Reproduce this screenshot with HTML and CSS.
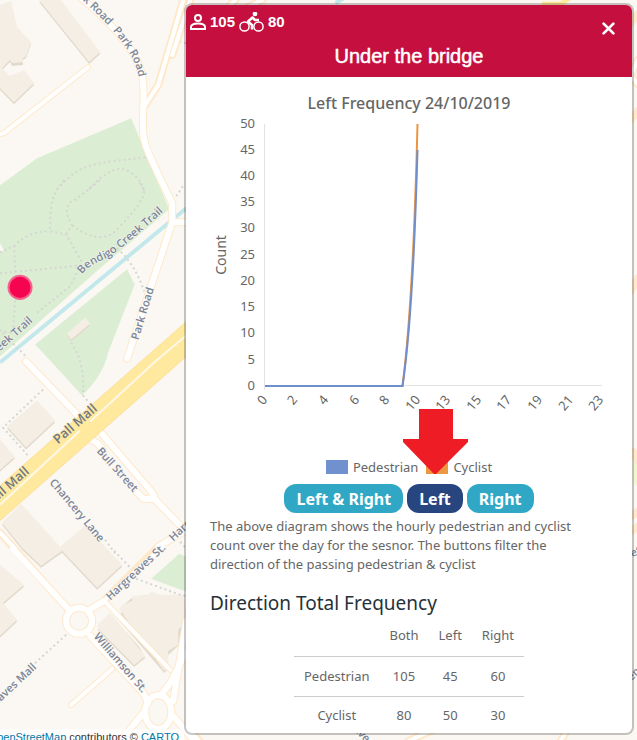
FILE: index.html
```
<!DOCTYPE html>
<html lang="en">
<head>
<meta charset="utf-8">
<meta name="viewport" content="width=device-width, initial-scale=1">
<title>Under the bridge</title>
<link rel="stylesheet" href="styles.css">
</head>
<body>
<div class="map">
  <svg class="map-tiles" viewBox="0 0 637 740" preserveAspectRatio="xMinYMin slice" role="img" aria-label="Street map">
    <g class="park">
      <path d="M0 185L37 158L131 118L160 188L169 209L100 268L0 356Z"/>
      <path d="M127 269L134.500 284L108 352Q103 375 82 395L50 360L35 344Z"/>
      <path d="M151 578L179 553L186 556V591Z"/>
      <path class="grass" d="M632 448L637 456V486L632 482Z"/>
    </g>
    <g class="building-shadow" transform="translate(0 2)">
      <path d="M0 5L11 1L17 27L31 42L26 56L23 58V63L12 64L10 60L2 68L10 76L24 70L34 83L14 102L0 88Z"/>
      <path d="M39 0H61L100 52L89 62Z"/>
      <path d="M67 333L85 317L90 323L71 339Z"/>
      <path d="M7 426L37 400L55 420L26 447Z"/>
      <path d="M0 439L15 456L0 469Z"/>
      <path d="M2 522L21 503L60 546L85 525L122 564L97 587L62 550L41 565L22 547Z"/>
      <path d="M0 564L24 584L3 602L17 619L0 635Z"/>
      <path d="M98 623L110 612L139 644L145 655L134 664L98 628Z"/>
      <path d="M121 604L132 595L153 591L185 604V626L179 642L166 654L168 666L164 670L121 620Z"/>
    </g>
    <g class="building">
      <path d="M0 5L11 1L17 27L31 42L26 56L23 58V62L12 63L10 60L2 68L10 76L24 70L34 83L14 102L0 88Z"/>
      <path d="M39 0H61L100 52L89 62Z"/>
      <path d="M67 333L85 317L90 323L71 339Z"/>
      <path d="M7 426L37 400L55 420L26 447Z"/>
      <path d="M0 439L15 456L0 469Z"/>
      <path d="M2 522L21 503L60 546L85 525L122 564L97 587L62 550L41 565L22 547Z"/>
      <path d="M0 564L24 584L3 602L17 619L0 635Z"/>
      <path d="M98 623L110 612L145 655L134 664L98 628Z"/>
      <path d="M119 608L122 604L132 600V595H145L152 591L160 594H185V621L178 629V644L168 650V665L164 670Z"/>
      <path d="M0 243L4 250L0 253Z" fill="#fbf7f2"/>
    </g>
    <path class="creek" d="M0 362L186 208M335 3L346 -3"/>
    <g class="footpath">
      <path d="M57 189C75 170 80 166 112 161L146 157M89 189C105 171 119 164 130 172Q140 178 144 190"/>
      <path d="M64 180C51 195 50 205 50 231L66 234L82 262L70 286L35 314M66 234L72 225Q60 205 76 199L100 180M72 225Q102 247 118 228Q145 200 144 190L138 180"/>
      <path d="M0 252L15 245Q30 230 50 231M14 245L16 285L13 333L0 330L25 355M0 273L80 265"/>
      <path d="M117 248Q135 264 144 291M176 196L184 184M174 41L186 43M71 342Q85 362 83 395L88 401M43 389L3 427L28 455M105 539L116 554"/>
      <path d="M114 550L132 569M136 578L180 594L186 595M66 634L33 664M180 541L186 548"/>
    </g>
    <g class="road-casing">
      <path d="M74 -8C112 23 142 54 143 84C145 108 139 132 147 149Q150 158 172 203V222L127 358M183 0L158 85L145 105M172 222H186"/>
      <path class="thin" d="M0 134L4 133L88 67"/>
      <path d="M26 361L82 419M90 439Q100 442 103 451M100 431L152 492Q158 500 143 498L137 492M152 496L185 530L158 546L104 600"/>
      <path d="M0 532L57 596L69 609M90 635L143 692L148 702M91 608L104 600M186 651L170 682L160 695M186 620L173 700M144 711L120 740M174 716L194 740"/>
      <path class="thin" d="M104 600L170 669M112 668L71 704"/>
      <path d="M190 0L172 55M235 0L230 5M262 0L246 8M636 15L628 25M637 60L630 76L637 84M637 111L630 119M637 278L630 290M632 451L637 460M631 515L637 511M631 530L637 526M190 730L199 740M408 740L432 729M560 740L567 728"/>
      <circle cx="79" cy="620" r="13"/>
      <ellipse cx="158" cy="711" rx="13" ry="17"/>
    </g>
    <g class="road">
      <path d="M74 -8C112 23 142 54 143 84C145 108 139 132 147 149Q150 158 172 203V222L127 358M172 222H186"/>
      <path class="thin" d="M183 0L158 85L145 105M0 134L4 133L88 67M112 668L71 704M104 600L170 669"/>
      <path d="M26 361L82 419M90 439Q100 442 103 451M100 431L152 492Q158 500 143 498L137 492M152 496L185 530L158 546"/>
      <path d="M13 548L57 596L69 609M90 635L143 692L148 702M91 608L104 600M186 651L170 682L160 695M186 620L173 700M144 711L120 740M174 716L194 740"/>
      <path class="thin" d="M0 532L15 548M104 600L163 545"/>
      <path class="thin" d="M190 0L172 55M235 0L230 5M262 0L246 8M637 60L630 76L637 84M190 730L199 740M408 740L432 729M560 740L567 728"/>
      <circle cx="79" cy="620" r="13"/>
      <ellipse cx="158" cy="711" rx="13" ry="17"/>
    </g>
    <g class="main-road">
      <path class="main-edge" d="M-8 501L194 323M-8 518L194 340"/>
      <path class="main-fill" d="M-8 501L194 323M-8 518L194 340"/>
      <path class="median" d="M0 504L80 430M90 421L155 361L186 335"/>
      <path class="side-main" d="M541 4L560 4L570 -3"/>
    </g>
    <g class="map-label">
      <path id="park-road" class="guide" d="M80 -2C108 24 132 48 138 74Q140 84 142 110"/>
      <text><textPath href="#park-road" startOffset="3">k Road</textPath></text>
      <text><textPath href="#park-road" startOffset="46">Park Road</textPath></text>
      <path id="creek-trail" class="guide" d="M82 274Q87 266 106 258Q120 251 180 196"/>
      <text><textPath href="#creek-trail">Bendigo Creek Trail</textPath></text>
      <text transform="translate(138 340) rotate(-73)">Park Road</text>
      <text text-anchor="end" transform="translate(33 321) rotate(-42)">Creek Trail</text>
      <text class="large" transform="translate(58 444) rotate(-41)">Pall Mall</text>
      <text class="large" text-anchor="end" transform="translate(30 472) rotate(-41)">Pall Mall</text>
      <text transform="translate(96 451) rotate(48)">Bull Street</text>
      <text transform="translate(49 482) rotate(50)">Chancery Lane</text>
      <text transform="translate(110 600) rotate(-43)">Hargreaves St.</text>
      <text transform="translate(173 541) rotate(-43)">Hargreaves</text>
      <text transform="translate(93 636) rotate(49)">Williamson St.</text>
      <text text-anchor="end" transform="translate(37 667) rotate(-43)">Hargreaves Mall</text>
      <text text-anchor="end" transform="translate(641 552) rotate(-25)">Street</text>
      <text text-anchor="end" transform="translate(640 671) rotate(-45)">Queen</text>
      <text text-anchor="end" transform="translate(365 742) rotate(48)">Ave</text>
    </g>
    <circle class="sensor" cx="20" cy="287" r="11.500"/>
  </svg>
  <div class="attribution"><a href="#osm">OpenStreetMap</a><span>contributors ©</span><a href="#carto">CARTO</a></div>
</div>

<main class="panel">
  <header class="panel-header">
    <div class="counts">
      <svg class="person" viewBox="0 0 16 16" aria-label="Pedestrians"><circle cx="8" cy="4" r="3"/><path d="M1 15V13C1 10.500 5 9.500 8 9.500S15 10.500 15 13V15Z"/></svg>
      <span>105</span>
      <svg class="bike" viewBox="0 0 25 20" aria-label="Cyclists"><circle cx="5.500" cy="14.500" r="4.600"/><circle cx="19.500" cy="14.500" r="4.600"/><circle class="solid" cx="16" cy="2" r="1.600"/><path class="frame" d="M13 17.500V13L9 9.500L13.500 5.500L16 8H20"/></svg>
      <span>80</span>
    </div>
    <h1>Under the bridge</h1>
    <button class="close" type="button" aria-label="Close"><svg viewBox="0 0 12 12"><path d="M1.500 1.500L10.500 10.500M10.500 1.500L1.500 10.500"/></svg></button>
  </header>

  <section class="frequency">
    <h2>Left Frequency 24/10/2019</h2>
    <svg class="chart" viewBox="0 0 446 302" role="img" aria-label="Hourly count, pedestrians and cyclists">
      <path class="axis" d="M78.500 8V274M78 269.500H416"/>
      <path class="cyclist" d="M79 270H216.500Q227 190 231.500 8"/>
      <path class="pedestrian" d="M79 270H216.500Q227 200 231.500 34"/>
      <g class="y-ticks">
        <text x="69" y="12">50</text><text x="69" y="38">45</text><text x="69" y="64">40</text><text x="69" y="90">35</text><text x="69" y="116">30</text><text x="69" y="143">25</text><text x="69" y="169">20</text><text x="69" y="195">15</text><text x="69" y="221">10</text><text x="69" y="248">5</text><text x="69" y="274">0</text>
      </g>
      <text class="axis-title" transform="translate(40 139) rotate(-90)">Count</text>
      <g class="x-ticks">
        <text transform="translate(82 284) rotate(-50)">0</text><text transform="translate(112 284) rotate(-50)">2</text><text transform="translate(143 284) rotate(-50)">4</text><text transform="translate(174 284) rotate(-50)">6</text><text transform="translate(204 284) rotate(-50)">8</text><text transform="translate(235 284) rotate(-50)">10</text><text transform="translate(265 284) rotate(-50)">13</text><text transform="translate(296 284) rotate(-50)">15</text><text transform="translate(326 284) rotate(-50)">17</text><text transform="translate(357 284) rotate(-50)">19</text><text transform="translate(388 284) rotate(-50)">21</text><text transform="translate(418 284) rotate(-50)">23</text>
      </g>
    </svg>
    <div class="legend">
      <span class="key"><i class="swatch blue"></i>Pedestrian</span>
      <span class="key"><i class="swatch orange"></i>Cyclist</span>
      <svg class="pointer" viewBox="0 0 66 66" aria-hidden="true"><path d="M16 0H50V30H65V33L33 65H31L0 33V30H16Z"/></svg>
    </div>
    <div class="filters">
      <button type="button">Left &amp; Right</button>
      <button type="button" class="active">Left</button>
      <button type="button">Right</button>
    </div>
  </section>

  <section class="details">
    <p>The above diagram shows the hourly pedestrian and cyclist count over the day for the sesnor. The buttons filter the direction of the passing pedestrian &amp; cyclist</p>
    <h2>Direction Total Frequency</h2>
    <table>
      <thead><tr><td></td><th scope="col">Both</th><th scope="col">Left</th><th scope="col">Right</th></tr></thead>
      <tbody>
        <tr><th scope="row">Pedestrian</th><td>105</td><td>45</td><td>60</td></tr>
        <tr><th scope="row">Cyclist</th><td>80</td><td>50</td><td>30</td></tr>
      </tbody>
    </table>
  </section>
</main>
</body>
</html>
```
FILE: styles.css
```
* { box-sizing: border-box; }
body {
  margin: 0;
  min-height: 100vh;
  position: relative;
  display: flow-root;
  overflow: hidden;
  background: #fbf8f3;
  color: #666;
  font-family: "Noto Sans", sans-serif;
  font-size: 13px;
}
.map { position: absolute; inset: 0; overflow: hidden; }
.map-tiles { display: block; width: 100%; height: 100%; fill: none; }
.park { fill: #dbeed3; }
.grass { fill: #f2f8cd; }
.building { fill: #f5eee4; }
.building-shadow { fill: #e3dacd; }
.creek { stroke: #c2e8ec; stroke-width: 4; }
.footpath { stroke: #d5d6d2; stroke-width: 2; stroke-dasharray: 2 3; }
.road-casing { stroke: #ffe9cb; stroke-width: 8; stroke-linejoin: round; stroke-linecap: round; }
.road-casing .thin { stroke-width: 6; }
.road { stroke: #fff; stroke-width: 6; stroke-linejoin: round; stroke-linecap: round; }
.road .thin { stroke-width: 4; }
.main-edge { stroke: #fbd993; stroke-width: 14; }
.main-fill { stroke: #ffe99e; stroke-width: 13; }
.median { stroke: #fff8e6; stroke-width: 2; }
.side-main { stroke: #ffe99e; stroke-width: 5; }
.map-label {
  fill: #7b8698;
  font: 600 11px "Open Sans", sans-serif;
  stroke: #fbf8f3;
  stroke-width: 1;
  paint-order: stroke;
}
.map-label .large { font-size: 13px; fill: #6f7787; stroke: #ffe99e; }
.map-label .guide { fill: none; stroke: none; }
.sensor { fill: #f5054f; stroke: #f5628f; stroke-width: 2; }
.attribution {
  position: absolute;
  left: 0;
  bottom: 0;
  width: 184px;
  height: 12px;
  padding-right: 5px;
  display: flex;
  justify-content: flex-end;
  gap: 3px;
  overflow: hidden;
  white-space: nowrap;
  background: rgba(255, 255, 255, .7);
  color: #333;
  font: 11px/16px "Liberation Sans", sans-serif;
}
.attribution a { color: #0078a8; text-decoration: none; }

.panel {
  position: relative;
  width: min(450px, 100% - 6px);
  margin: 3px 3px 6px auto;
  border: 2px solid rgba(0, 0, 0, .22);
  border-radius: 8px;
  background: #fff;
  background-clip: padding-box;
  overflow: hidden;
}
.panel-header {
  position: relative;
  height: 72px;
  padding: 8px 4px;
  background: #c40f3f;
  color: #fff;
  font-family: "Liberation Sans", sans-serif;
}
.counts { display: flex; align-items: center; gap: 4px; height: 18px; font-size: 15px; font-weight: bold; line-height: 18px; }
.counts svg { fill: none; stroke: #fff; stroke-width: 2; }
.person { width: 16px; height: 16px; }
.bike { width: 25px; height: 20px; }
.counts .bike { stroke-width: 1.500; }
.bike .solid { fill: #fff; }
.counts .frame { stroke-width: 2.500; stroke-linejoin: round; }
h1 { margin: 14px 0 0; font-size: 20px; line-height: 22px; font-weight: normal; text-align: center; -webkit-text-stroke: 0.5px #fff; }
.close { position: absolute; top: 16px; right: 16px; width: 15px; height: 15px; padding: 1px; border: 0; background: none; }
.close svg { display: block; width: 13px; height: 13px; fill: none; stroke: #fff; stroke-width: 2.500; stroke-linecap: round; }

.frequency h2 { margin: 16px 0 3px; font-size: 16px; line-height: 20px; font-weight: 500; text-align: center; color: #666; }
.chart { display: block; width: 100%; fill: none; }
.axis { stroke: #e3e3e3; }
.cyclist, .pedestrian { stroke-width: 2; }
.cyclist { stroke: #ec953e; }
.pedestrian { stroke: #6f8ecc; }
.chart text { fill: #666; font-size: 13px; }
.y-ticks, .x-ticks { text-anchor: end; }
.chart .axis-title { font-size: 14px; text-anchor: middle; }
.legend { position: relative; display: flex; justify-content: center; gap: 8px; margin-top: 39px; height: 20px; line-height: 20px; }
.key { display: flex; align-items: center; gap: 5px; }
.swatch { width: 22px; height: 14px; }
.blue { background: #7090ce; }
.orange { background: #ed9740; }
.pointer { position: absolute; left: calc(50% - 6px); bottom: 2px; width: 66px; height: 66px; fill: #ee1c25; }
.filters { display: flex; justify-content: center; gap: 4px; margin-top: 7px; }
.filters button {
  height: 29px;
  padding: 0 12px;
  border: 0;
  border-radius: 12px;
  background: #30a8c5;
  color: #fff;
  font: bold 16px/28px "Noto Sans", sans-serif;
}
.filters .active { background: #27467f; }
.details { padding: 4px 24px 0; }
.details p { margin: 0; max-width: 380px; line-height: 19px; }
.details h2 { margin: 18px 0 0; font-size: 19px; line-height: 22px; font-weight: normal; color: #26323a; }
table { margin: 0 auto; border-collapse: collapse; text-align: center; }
th, td { height: 40px; padding: 0 10px; font-weight: normal; }
thead th, thead td { height: 42px; }
tbody th, tbody td { border-top: 1px solid #ccc; }
tbody tr:last-child > * { height: 37px; }
```
